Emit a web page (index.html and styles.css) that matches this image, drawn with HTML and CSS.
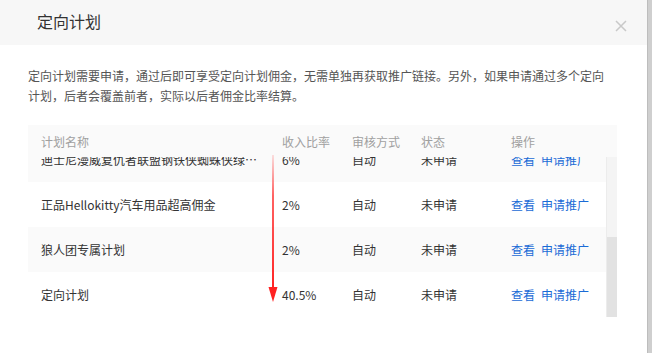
FILE: index.html
```html
<!DOCTYPE html>
<html lang="zh-CN">
<head>
<meta charset="utf-8">
<title>定向计划</title>
<link rel="stylesheet" href="styles.css">
</head>
<body>
<div class="page">
  <div class="dialog">
    <div class="dialog-head">
      <span class="dialog-title">定向计划</span>
      <svg class="close" width="12" height="12" viewBox="0 0 12 12"><path d="M1 1L11 11M11 1L1 11" stroke="#c9c9c9" stroke-width="1.5" fill="none"/></svg>
    </div>
    <div class="dialog-body">
      <p class="desc">定向计划需要申请，通过后即可享受定向计划佣金，无需单独再获取推广链接。另外，如果申请通过多个定向计划，后者会覆盖前者，实际以后者佣金比率结算。</p>
      <div class="table">
        <div class="row head-row">
          <div class="c1">计划名称</div>
          <div>收入比率</div>
          <div>审核方式</div>
          <div>状态</div>
          <div>操作</div>
        </div>
        <div class="body-area">
          <div class="viewport">
            <div class="rows">
              <div class="row odd">
                <div class="c1 ellipsis">迪士尼漫威复仇者联盟钢铁侠蜘蛛侠绿巨人儿童玩具</div>
                <div>6%</div>
                <div>自动</div>
                <div>未申请</div>
                <div class="ops"><a>查看</a><a>申请推广</a></div>
              </div>
              <div class="row">
                <div class="c1 ellipsis">正品Hellokitty汽车用品超高佣金</div>
                <div>2%</div>
                <div>自动</div>
                <div>未申请</div>
                <div class="ops"><a>查看</a><a>申请推广</a></div>
              </div>
              <div class="row odd">
                <div class="c1 ellipsis">狼人团专属计划</div>
                <div>2%</div>
                <div>自动</div>
                <div>未申请</div>
                <div class="ops"><a>查看</a><a>申请推广</a></div>
              </div>
              <div class="row">
                <div class="c1 ellipsis">定向计划</div>
                <div>40.5%</div>
                <div>自动</div>
                <div>未申请</div>
                <div class="ops"><a>查看</a><a>申请推广</a></div>
              </div>
            </div>
          </div>
          <div class="scrollbar"><div class="thumb"></div></div>
        </div>
      </div>
    </div>
    <svg class="arrow" width="12" height="150" viewBox="0 0 12 150">
      <defs>
        <linearGradient id="ag" x1="0" y1="0" x2="0" y2="1">
          <stop offset="0" stop-color="#ff3b3b" stop-opacity="0.15"/>
          <stop offset="0.3" stop-color="#ff3b3b" stop-opacity="0.8"/>
          <stop offset="1" stop-color="#f22" stop-opacity="1"/>
        </linearGradient>
      </defs>
      <rect x="5" y="0" width="2" height="136" fill="url(#ag)"/>
      <path d="M1.5 132L10.5 132L6 147Z" fill="#f22"/>
    </svg>
  </div>
  <div class="backdrop"></div>
</div>
</body>
</html>
```
FILE: styles.css
```css
html, body {
  margin: 0;
  padding: 0;
}
body {
  font-family: "Noto Sans CJK SC", "Microsoft YaHei", sans-serif;
  background: #fff;
  width: 652px;
  height: 353px;
  overflow: hidden;
}
.page {
  display: flex;
  height: 353px;
}
.dialog {
  position: relative;
  width: 647px;
  background: #fff;
  display: flex;
  flex-direction: column;
}
.backdrop {
  flex: 1;
  background: #cfcfcf;
  border-left: 1px solid #bdbdbd;
}
.dialog-head {
  height: 45px;
  background: #f7f7f7;
  display: flex;
  align-items: center;
  justify-content: space-between;
  padding: 0 20px 0 37px;
}
.dialog-title {
  font-size: 16px;
  color: #333;
  margin-top: -4px;
}
.close {
  margin-top: 6px;
}
.dialog-body {
  padding: 0 30px 0 28px;
}
.desc {
  margin: 21px 0 0 0;
  font-size: 12px;
  line-height: 20px;
  color: #555;
  width: 580px;
}
.table {
  margin-top: 19px;
  width: 589px;
}
.row {
  display: grid;
  grid-template-columns: 241px 70px 69px 90px 1fr;
  align-items: center;
  padding-left: 13px;
  font-size: 12px;
  height: 45px;
  color: #333;
}
.row > div {
  white-space: nowrap;
}
.head-row {
  height: 32px;
  background: #fafafa;
  color: #a0a0a0;
  padding-top: 1px;
  box-sizing: border-box;
}
.body-area {
  display: flex;
  height: 160px;
}
.viewport {
  width: 579px;
  overflow: hidden;
}
.rows {
  margin-top: -20px;
}
.row.odd {
  background: #fafafa;
}
.ellipsis {
  overflow: hidden;
  text-overflow: ellipsis;
  padding-right: 20px;
}
.ops {
  display: flex;
  gap: 6px;
}
.ops a {
  color: #1a6bd6;
  cursor: pointer;
}
.scrollbar {
  width: 10px;
  background: #f4f4f4;
  display: flex;
  flex-direction: column;
  justify-content: flex-end;
  border-left: 1px solid #ececec;
}
.thumb {
  height: 80px;
  background: #e2e2e2;
}
.arrow {
  position: absolute;
  left: 267px;
  top: 155px;
}
```
